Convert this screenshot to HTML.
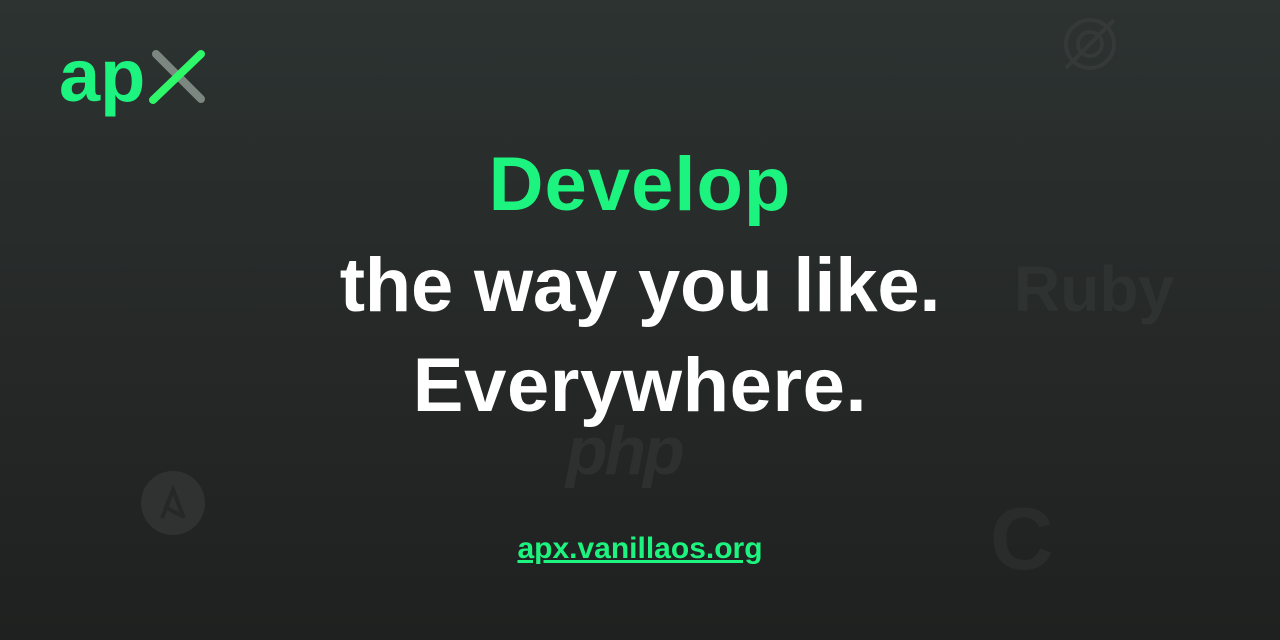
<!DOCTYPE html>
<html><head><style>
html,body{margin:0;padding:0}
body{width:1280px;height:640px;overflow:hidden;position:relative;background:linear-gradient(180deg,#2c3331 0%,#262928 50%,#1f2120 100%);font-family:"Liberation Sans",sans-serif}
.l{position:absolute;left:0;width:1280px;text-align:center;font-weight:bold}
.f{position:absolute;font-weight:bold;color:#3a3d3c}
</style></head><body>
<div class="f" style="left:1014px;top:252px;font-size:64px;color:#2e3231">Ruby</div>
<div class="f" style="left:566px;top:412px;font-size:68px;font-style:italic;color:#2d302f;letter-spacing:-3px">php</div>
<div class="f" style="left:990px;top:488px;font-size:88px;color:#2a2c2b">C</div>
<svg style="position:absolute;left:140px;top:470px" width="66" height="66"><circle cx="33" cy="33" r="32" fill="#2f3231"/><path d="M22 48 L33 20 L44 48 M27 38 L42 46" stroke="#262827" stroke-width="4" fill="none"/></svg>
<svg style="position:absolute;left:1058px;top:12px" width="64" height="64"><g stroke="#353937" stroke-width="4" fill="none"><circle cx="32" cy="32" r="24"/><circle cx="32" cy="32" r="12"/><path d="M8 56 L56 8"/></g></svg>
<svg style="position:absolute;left:0;top:0" width="220" height="130">
<text x="59" y="101" font-family="Liberation Sans,sans-serif" font-weight="bold" font-size="74" fill="#1df37f">ap</text>
<line x1="156" y1="54" x2="201" y2="99" stroke="#7d8782" stroke-width="8" stroke-linecap="round"/>
<line x1="201" y1="54" x2="153" y2="100" stroke="#2ef76a" stroke-width="8" stroke-linecap="round"/>
</svg>
<div class="l" style="top:140px;font-size:76px;line-height:90px;color:#1df37f;letter-spacing:1px">Develop</div>
<div class="l" style="top:241px;font-size:76px;line-height:90px;color:#fff;letter-spacing:-0.2px">the way you like.</div>
<div class="l" style="top:341px;font-size:76px;line-height:90px;color:#fff;letter-spacing:0.6px">Everywhere.</div>
<div class="l" style="top:531px;font-size:30px;line-height:36px;color:#1df37f;letter-spacing:0"><span style="text-decoration:underline">apx.vanillaos.org</span></div>
</body></html>
